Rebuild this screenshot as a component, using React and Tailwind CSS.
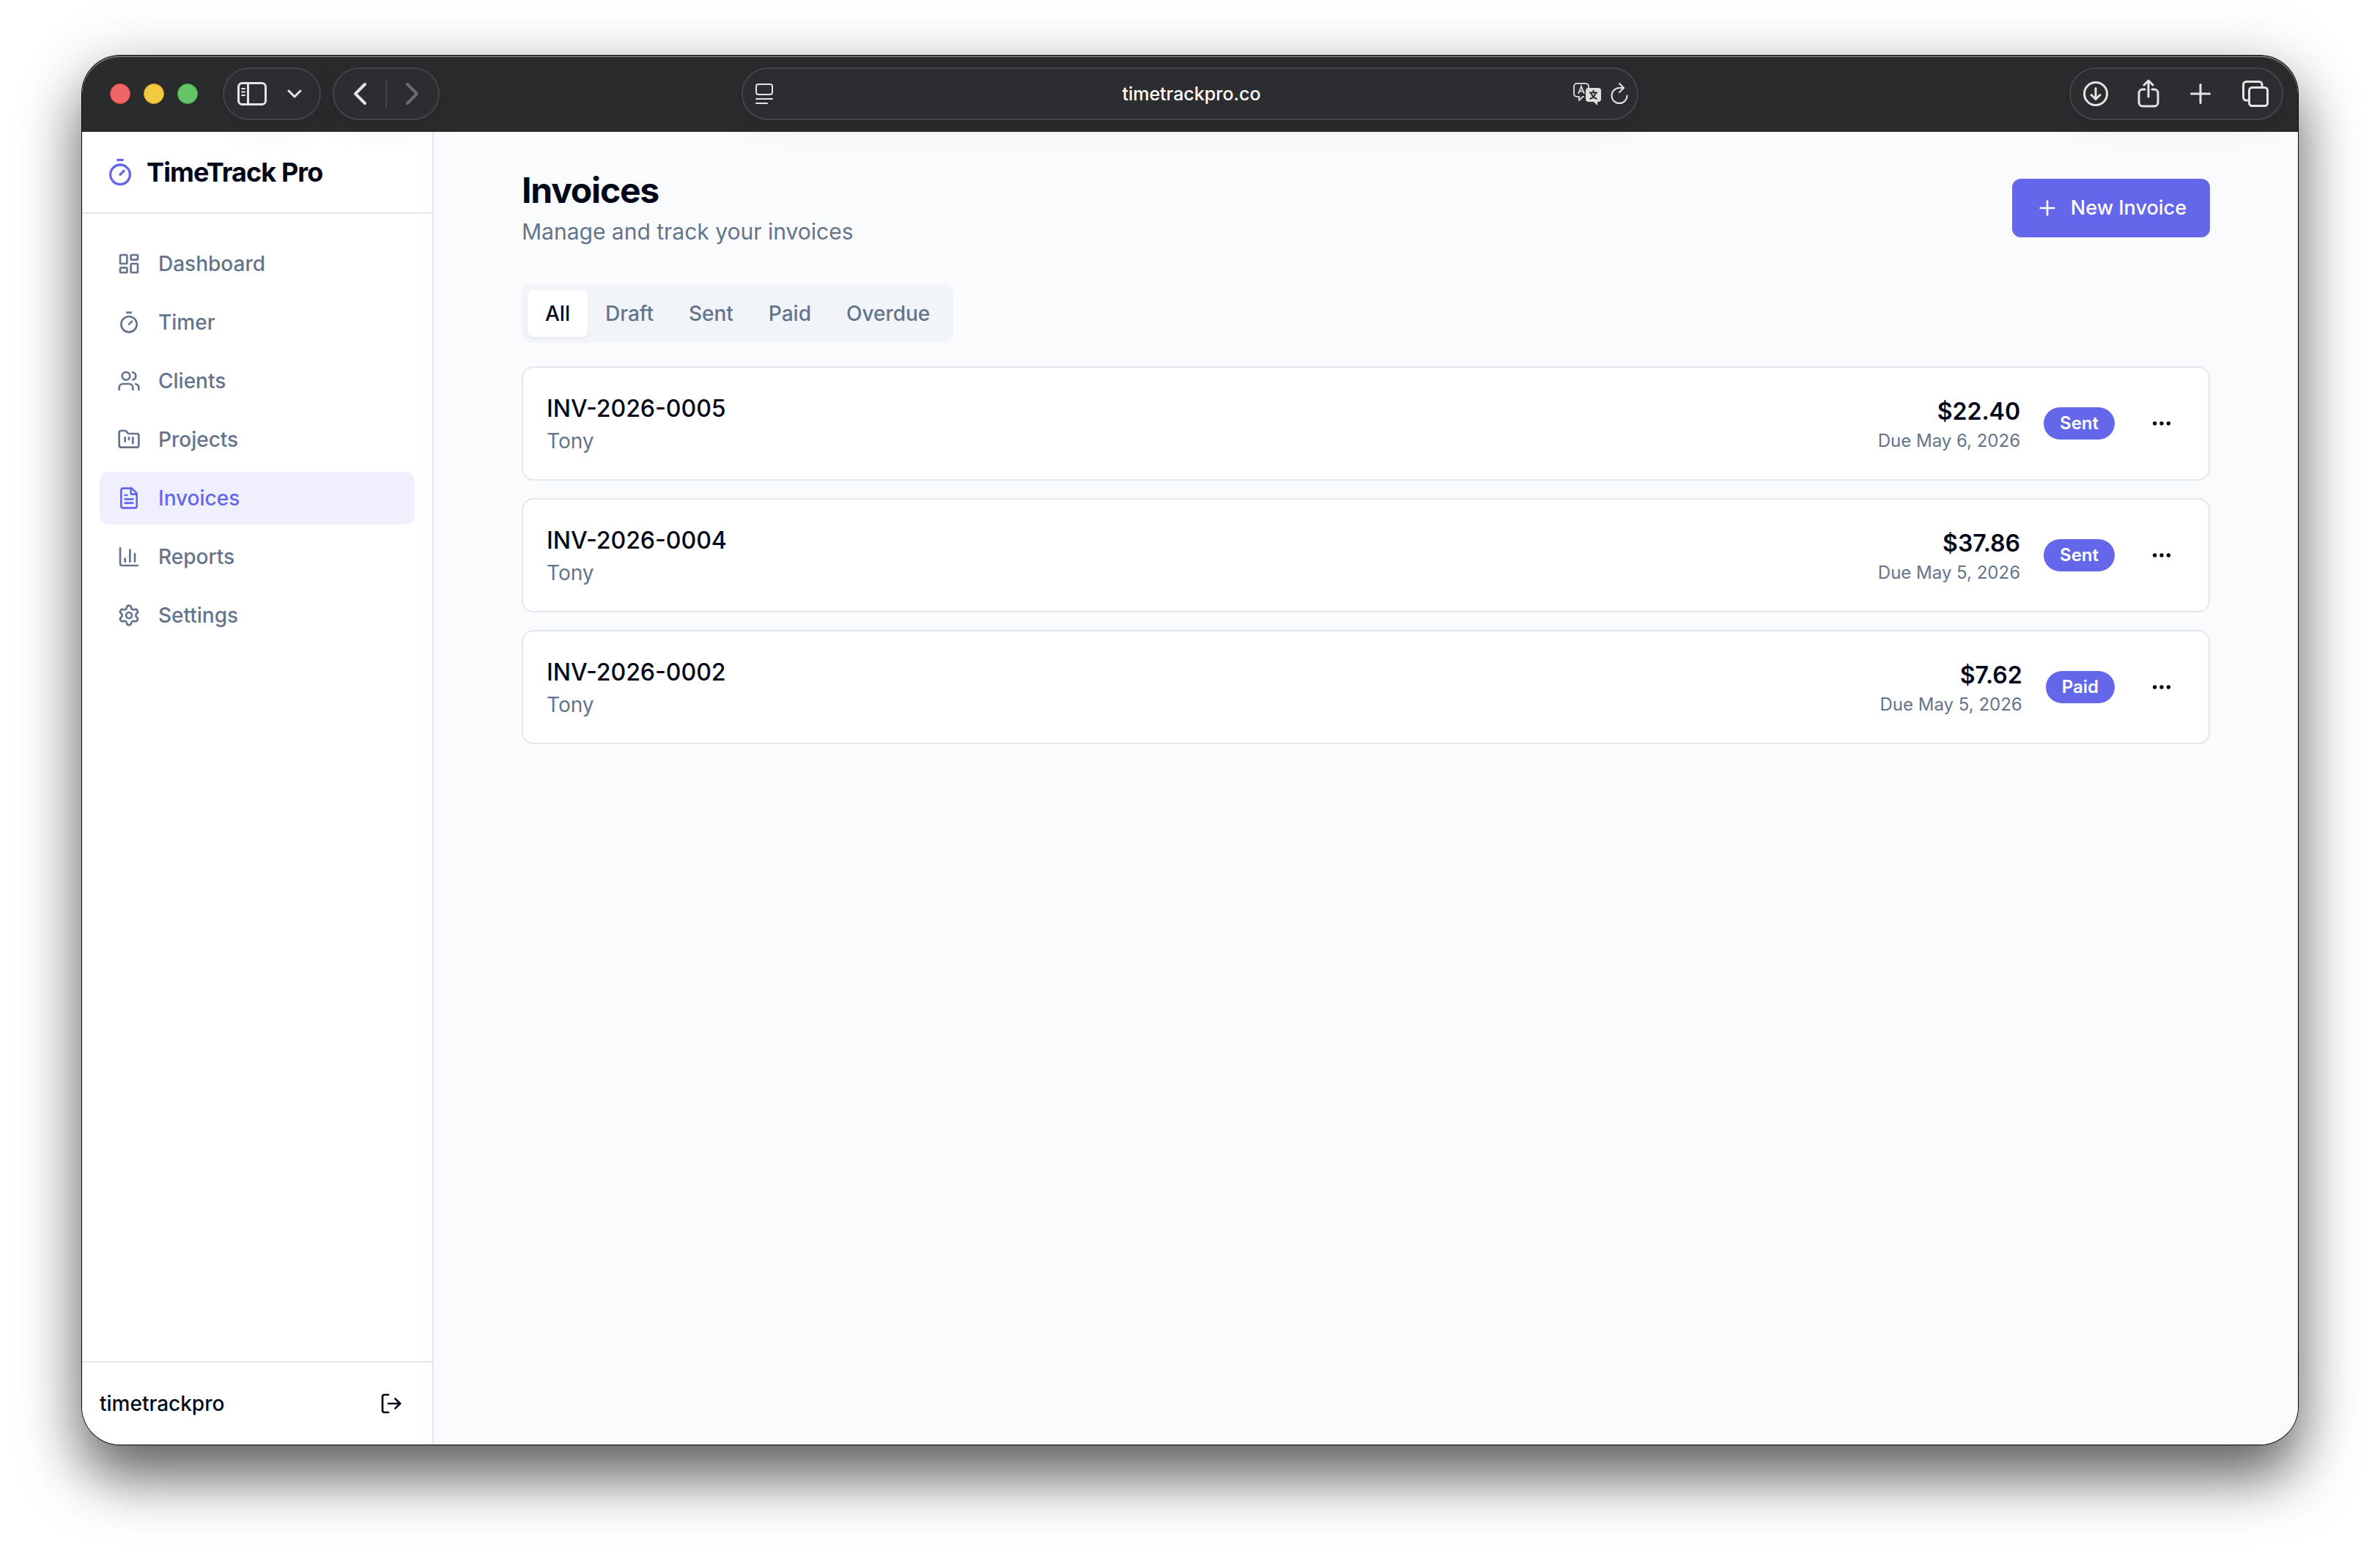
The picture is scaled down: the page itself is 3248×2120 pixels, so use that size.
import React from 'react';
import {
  LayoutDashboard,
  Timer,
  Users,
  FolderKanban,
  FileText,
  ChartColumn,
  Settings,
  LogOut,
  Plus,
  Ellipsis,
} from 'lucide-react';

const navItems = [
  { name: 'Dashboard', icon: LayoutDashboard },
  { name: 'Timer', icon: Timer },
  { name: 'Clients', icon: Users },
  { name: 'Projects', icon: FolderKanban },
  { name: 'Invoices', icon: FileText },
  { name: 'Reports', icon: ChartColumn },
  { name: 'Settings', icon: Settings },
];

const tabs = ['All', 'Draft', 'Sent', 'Paid', 'Overdue'];

const invoices = [
  { number: 'INV-2026-0005', client: 'Tony', amount: '$22.40', due: 'May 6, 2026', status: 'Sent' },
  { number: 'INV-2026-0004', client: 'Tony', amount: '$37.86', due: 'May 5, 2026', status: 'Sent' },
  { number: 'INV-2026-0002', client: 'Tony', amount: '$7.62', due: 'May 5, 2026', status: 'Paid' },
];

const pill = 'flex h-[72px] items-center rounded-full border-2 border-[#414549] bg-[#2c2d31] shadow-[0_8px_40px_rgba(0,0,0,0.08)]';

// Thin rounded strokes shared by all the toolbar icons
const ToolIcon = ({ width, height, stroke = 3, children }) => (
  <svg
    width={width}
    height={height}
    viewBox={`0 0 ${width} ${height}`}
    fill="none"
    stroke="currentColor"
    strokeWidth={stroke}
    strokeLinecap="round"
    strokeLinejoin="round"
    aria-hidden="true"
  >
    {children}
  </svg>
);

const BrowserBar = () => (
  <header className="relative z-10 grid h-[104px] shrink-0 grid-cols-[1fr_1224px_1fr] items-center rounded-t-[52px] bg-[#2a2b2d] text-[#e4e4e4] shadow-[inset_0_2px_0_#6b6d6e]">
    <div className="flex items-center pl-[38px]">
      <div className="mr-[34px] flex gap-[18px]">
        <button aria-label="Close" className="size-7 rounded-full border border-[#e0443e] bg-[#ee6766]" />
        <button aria-label="Minimize" className="size-7 rounded-full border border-[#dea123] bg-[#f3c944]" />
        <button aria-label="Zoom" className="size-7 rounded-full border border-[#3fae45] bg-[#65c466]" />
      </div>

      <div className={`${pill} mr-4 w-[134px] justify-between pr-6 pl-[18px]`}>
        <button aria-label="Show sidebar">
          <ToolIcon width={40} height={32}>
            <rect x="1.5" y="1.5" width="37" height="29" rx="5" />
            <path d="M14.5 2v28" />
            <path d="M6 9h4M6 13.500h4M6 18h4" strokeWidth="2" />
          </ToolIcon>
        </button>
        <button aria-label="Tab groups">
          <ToolIcon width={20} height={14}>
            <path d="m2 3 8 8 8-8" />
          </ToolIcon>
        </button>
      </div>

      <div className={`${pill} w-[146px] justify-between px-[26px]`}>
        <button aria-label="Back">
          <ToolIcon width={20} height={32} stroke={4}>
            <path d="M16 3 3 16l13 13" />
          </ToolIcon>
        </button>
        <span className="h-10 w-0.5 bg-[#434448]" />
        <button aria-label="Forward" className="text-[#6b6c70]">
          <ToolIcon width={20} height={32} stroke={4}>
            <path d="m4 3 13 13L4 29" />
          </ToolIcon>
        </button>
      </div>
    </div>

    <div className={`${pill} justify-between pr-3 pl-4`}>
      <button aria-label="Page menu" className="w-[76px]">
        <ToolIcon width={26} height={30} stroke={2}>
          <rect x="2" y="2" width="22" height="14" rx="3" />
          <path d="M2 22h22M2 28h15" />
        </ToolIcon>
      </button>
      <a href="#" className="text-[25px] leading-8 font-medium text-white">timetrackpro.co</a>
      <div className="flex items-center gap-3">
        <button aria-label="Translate">
          <svg width="40" height="32" viewBox="0 0 40 32" fill="none" aria-hidden="true">
            <path
              d="M16 20h-2l-5 5v-5H6a4 4 0 0 1-4-4V6a4 4 0 0 1 4-4h12a4 4 0 0 1 4 4v2"
              stroke="#cfcfcf"
              strokeWidth="2"
              strokeLinejoin="round"
            />
            <path d="m8 16 4-10 4 10M9.500 12.500h5" stroke="#cfcfcf" strokeWidth="2" />
            <path d="M22 8h13a4 4 0 0 1 4 4v11a4 4 0 0 1-4 4h-1v5l-5-5h-7a4 4 0 0 1-4-4V12a4 4 0 0 1 4-4z" fill="#dedede" />
            <path d="M28.500 11v3M23 14.500h11M25.500 15c1 4 4 7 8 8M31.500 15c-1 4-4 7-8 8" stroke="#2c2d31" strokeWidth="2" />
          </svg>
        </button>
        <button aria-label="Reload">
          <ToolIcon width={24} height={30} stroke={2}>
            <path d="M22.500 17.500a10.500 10.500 0 1 1-10.500-10.500h5" />
            <path d="m12 1 6 6-6 6" />
          </ToolIcon>
        </button>
      </div>
    </div>

    <div className="flex justify-end pr-5">
      <div className={`${pill} w-[292px] justify-between pr-[18px] pl-4`}>
        <button aria-label="Downloads">
          <ToolIcon width={36} height={36} stroke={3}>
            <circle cx="18" cy="18" r="15.500" />
            <path d="M18 10.500v15M12 19.500l6 6 6-6" />
          </ToolIcon>
        </button>
        <button aria-label="Share">
          <ToolIcon width={30} height={40} stroke={3}>
            <path d="M10 14H7a5 5 0 0 0-5 5v13a5 5 0 0 0 5 5h16a5 5 0 0 0 5-5V19a5 5 0 0 0-5-5h-3" />
            <path d="M15 24V3M9 8l6-6 6 6" />
          </ToolIcon>
        </button>
        <button aria-label="New tab" className="flex w-9 justify-center">
          <ToolIcon width={30} height={30}>
            <path d="M15 2.500v25M2.500 15h25" />
          </ToolIcon>
        </button>
        <button aria-label="Show tabs">
          <ToolIcon width={36} height={36}>
            <rect x="9.500" y="9.500" width="25" height="25" rx="4" />
            <path d="M7 27H5.500a4 4 0 0 1-4-4V5.500a4 4 0 0 1 4-4H23a4 4 0 0 1 4 4V7" />
          </ToolIcon>
        </button>
      </div>
    </div>
  </header>
);

const Sidebar = () => (
  <aside className="flex w-[480px] shrink-0 flex-col border-r-2 border-slate-200 bg-white">
    <div className="flex h-28 items-center gap-4 border-b-2 border-slate-200 px-8">
      <Timer className="size-10 text-[#6467ea]" />
      <span className="text-[36px] leading-[56px] font-bold tracking-tight">TimeTrack Pro</span>
    </div>

    <nav className="flex flex-1 flex-col gap-2 px-6 py-8">
      {navItems.map(({ name, icon: Icon }) => (
        <a
          key={name}
          href="#"
          className={`flex h-[72px] items-center gap-6 rounded-xl px-6 text-[28px] leading-10 font-medium ${
            name === 'Invoices' ? 'bg-[#f0effd] text-[#6467ea]' : 'text-[#64748b]'
          }`}
        >
          <Icon className="size-8" />
          {name}
        </a>
      ))}
    </nav>

    <div className="flex items-center justify-between border-t-2 border-slate-200 p-6">
      <span className="text-[28px] leading-10 font-medium">timetrackpro</span>
      <button aria-label="Log out" className="flex size-16 items-center justify-center">
        <LogOut className="size-8" />
      </button>
    </div>
  </aside>
);

const InvoiceCard = ({ invoice }) => (
  <li className="flex items-center justify-between rounded-2xl border-2 border-slate-200 bg-white p-8">
    <div>
      <p className="text-[32px] leading-[48px] font-medium">{invoice.number}</p>
      <p className="text-[28px] leading-10 text-[#64748b]">{invoice.client}</p>
    </div>
    <div className="flex items-center gap-8">
      <div className="text-right">
        <p className="text-[32px] leading-[48px] font-semibold">{invoice.amount}</p>
        <p className="text-2xl leading-8 text-[#64748b]">Due {invoice.due}</p>
      </div>
      <span className="rounded-full bg-[#6467ea] px-[22px] py-1.5 text-2xl leading-8 font-semibold text-white">
        {invoice.status}
      </span>
      <button aria-label={`Actions for ${invoice.number}`} className="flex size-16 items-center justify-center">
        <Ellipsis className="size-8" />
      </button>
    </div>
  </li>
);

const App = () => {
  return (
    <div className="flex h-screen bg-white px-28 pt-[76px] pb-[148px] font-['Inter','Liberation_Sans',sans-serif] text-[#020817]">
      <div className="flex min-w-0 flex-1 rounded-[52px] shadow-[0_0_0_1px_#000,0_44px_80px_rgba(0,0,0,0.6),0_0_100px_rgba(0,0,0,0.1)]">
        <div className="relative flex min-w-0 flex-1 flex-col overflow-hidden rounded-[52px]">
          <BrowserBar />

          <div className="flex min-h-0 flex-1">
            <Sidebar />

            {/* Invoices page */}
            <main className="flex-1 bg-[#fafbfd] py-12">
              <div className="mx-auto max-w-[2304px]">
                <div className="mb-12 flex items-center justify-between">
                  <div>
                    <h1 className="text-5xl leading-[64px] font-bold tracking-tight">Invoices</h1>
                    <p className="text-[30px] leading-[48px] text-[#64748b]">Manage and track your invoices</p>
                  </div>
                  <button className="flex h-20 items-center gap-4 rounded-xl bg-[#6467ea] px-8 text-[27px] leading-10 font-medium text-white">
                    <Plus className="size-8" />
                    New Invoice
                  </button>
                </div>

                <div role="tablist" className="inline-flex rounded-xl bg-slate-100 p-2">
                  {tabs.map((tab) => (
                    <button
                      key={tab}
                      role="tab"
                      aria-selected={tab === 'All'}
                      className={`rounded-lg px-6 py-3 text-[28px] leading-10 font-medium ${
                        tab === 'All' ? 'bg-white shadow-[0_2px_4px_rgba(0,0,0,0.06)]' : 'text-[#64748b]'
                      }`}
                    >
                      {tab}
                    </button>
                  ))}
                </div>

                <ul className="mt-8 flex flex-col gap-6">
                  {invoices.map((invoice) => (
                    <InvoiceCard key={invoice.number} invoice={invoice} />
                  ))}
                </ul>
              </div>
            </main>
          </div>
        </div>
      </div>
    </div>
  );
};

export default App;
